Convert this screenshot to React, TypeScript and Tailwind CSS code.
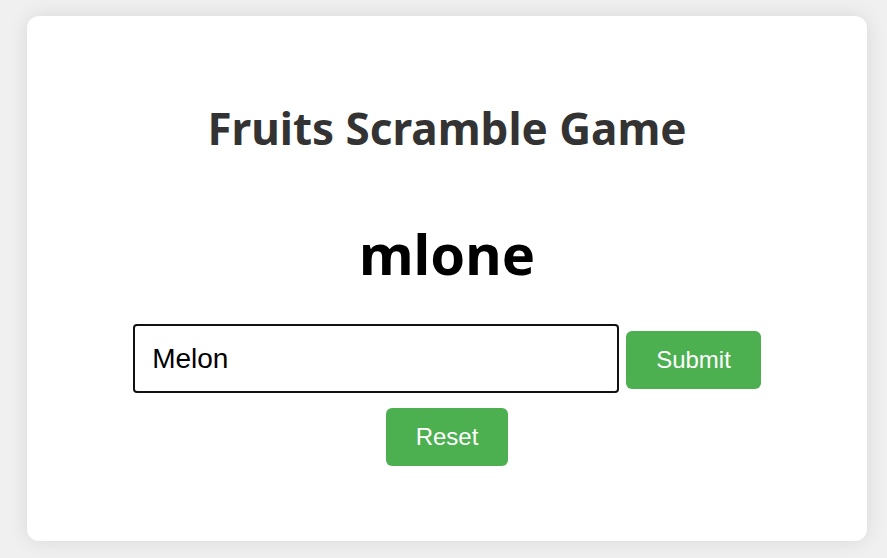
import { useState } from "react"

export default function App() {
  const [guess, setGuess] = useState("Melon")

  return (
    <div className="min-h-[558px] w-full bg-[#f0f0f0] pt-[16px] pl-[27px]">
      <div className="w-[840px] h-[525px] rounded-[12px] bg-white shadow-[0_0_20px_rgba(0,0,0,0.1)] flex flex-col items-center pt-[90px]">
        <h1 className="font-['Noto_Sans',sans-serif] font-bold text-[44px] leading-none text-[#333]">
          Fruits Scramble Game
        </h1>
        {/* scrambled word */}
        <h2 className="mt-[75px] font-['Noto_Sans',sans-serif] font-bold text-[56px] leading-none text-black">
          mlone
        </h2>
        <div className="mt-[43px] flex items-center">
          <input
            className="w-[486px] h-[69px] border-2 border-[#111] rounded-[4px] px-[17px] font-['Liberation_Sans',Arial,sans-serif] text-[28px] text-black outline-none"
            value={guess}
            onChange={(e) => setGuess(e.target.value)}
          />
          <button className="ml-[7px] mt-[3px] h-[58px] px-[30px] rounded-[6px] bg-[#4caf50] text-white font-['Liberation_Sans',Arial,sans-serif] text-[24px]">
            Submit
          </button>
        </div>
        <button
          className="mt-[15px] h-[58px] px-[30px] rounded-[6px] bg-[#4caf50] text-white font-['Liberation_Sans',Arial,sans-serif] text-[24px]"
          onClick={() => setGuess("")}
        >
          Reset
        </button>
      </div>
    </div>
  )
}
